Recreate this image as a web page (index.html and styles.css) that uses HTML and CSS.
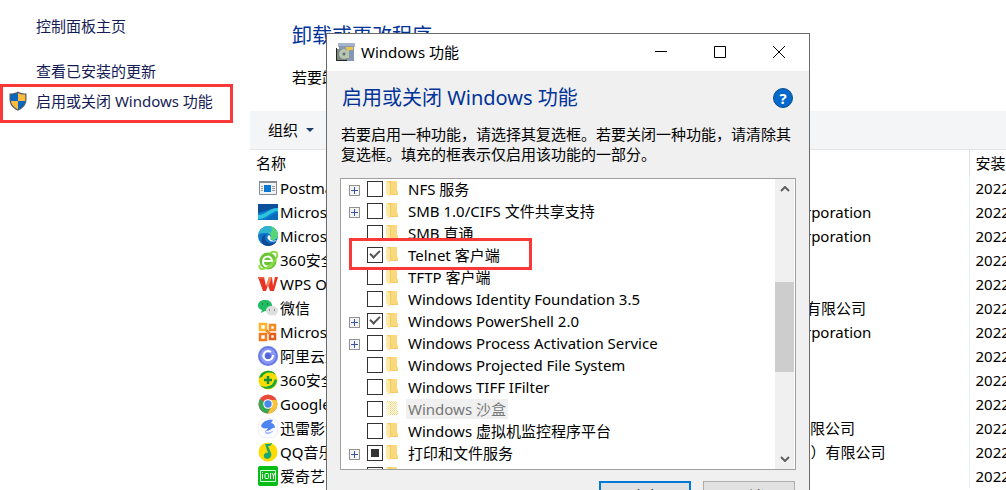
FILE: index.html
```html
<!DOCTYPE html>
<html lang="zh-CN">
<head>
    <meta charset="UTF-8">
    <meta name="viewport" content="width=device-width, initial-scale=1.0">
    <title>程序和功能</title>
    <link rel="stylesheet" href="styles.css">
</head>
<body>
    <!-- Shared icons -->
    <svg class="sprite" aria-hidden="true">
        <symbol id="folder" viewBox="0 0 12 16">
            <path d="M1 0h10v10h1v4H3z" fill="#f3ca63"/>
            <path d="M5 0h6v10h1v3H5z" fill="#f9d97c"/>
            <path d="M0 0l4 2v14l-3-2-1-3z" fill="#ffe9a6"/>
        </symbol>
    </svg>

    <div class="page">
        <nav class="sidebar">
            <a class="side-link" href="#">控制面板主页</a>
            <a class="side-link spaced" href="#">查看已安装的更新</a>
            <a class="side-link marked" href="#">
                <svg class="icon shield" viewBox="0 0 20 20">
                    <path d="M10 .5c2.500 1.500 5 2 8.500 2v6c0 5-3.500 9-8.500 11.300C5 17.500 1.500 13.500 1.500 8.500v-6c3.500 0 6-.5 8.500-2z" fill="#4d5b66"/>
                    <path d="M10 2v8H2.700V3.600C5.500 3.600 8 3 10 2z" fill="#0b66c3"/>
                    <path d="M10 2v8h7.300V3.600C14.500 3.600 12 3 10 2z" fill="#fdbc3a"/>
                    <path d="M10 10v8.400C6 16.500 3.300 13.500 2.800 10z" fill="#fdbc3a"/>
                    <path d="M10 10v8.400c4-1.900 6.700-4.900 7.200-8.400z" fill="#0b66c3"/>
                </svg>
                启用或关闭 Windows 功能
            </a>
        </nav>

        <main class="main">
            <h1>卸载或更改程序</h1>
            <p class="intro">若要卸载程序，请从列表中将其选中，然后单击“卸载”、“更改”或“修复”。</p>
            <div class="toolbar">
                <button type="button" class="organize">组织</button>
            </div>
            <table class="programs">
                <thead>
                    <tr><th class="col-name">名称</th><th class="col-publisher">发布者</th><th class="col-date">安装时间</th></tr>
                </thead>
                <tbody>
                    <tr>
                        <td><span class="program"><svg class="icon" viewBox="0 0 20 20"><path d="M1.500 3.500h17v13h-17z" fill="#f3f3f3" stroke="#858c92"/><path d="M1 3h18v2H1z" fill="#858c92"/><path d="M6 7h7v7H6z" fill="#0878d1"/><path d="M3 8.500h2M3 10.500h2M3 12.500h2M14 8.500h3M14 10.500h3M14 12.500h3" stroke="#999"/></svg>Postman</span></td>
                        <td>Postman</td><td>2022/3/15</td>
                    </tr>
                    <tr>
                        <td><span class="program"><svg class="icon" viewBox="0 0 20 20"><path d="M0 2h20v16H0z" fill="#087fd0"/><path d="M0 2h20v4C12 6 7 10 0 11z" fill="#0b4f9c"/><path d="M0 13C8 13 11 6 20 6v3C13 9 9 17 0 17z" fill="#2fc4dc"/><path d="M6 18c5-1 8-7 14-7v7z" fill="#096bb9"/></svg>Microsoft Azure</span></td>
                        <td>Microsoft Corporation</td><td>2022/3/15</td>
                    </tr>
                    <tr>
                        <td><span class="program"><svg class="icon" viewBox="0 0 20 20"><circle cx="10" cy="10" r="10" fill="#0b75c9"/><path d="M0 9C1 3 6 0 10 0c6 0 10 4 10 9 0 4-4 6-8 4 2-3 0-6-4-6-3 0-6 0-8 2z" fill="#2fb4d0"/><path d="M12 .3c5 1 8 5 8 9 0 4-5 6-8 4 2-2 1-5-1-6 3-1 4-4 1-7z" fill="#58d477"/><path d="M8 8c-3 4 0 10 6 9 2 0 4-1 5-2-3 5-9 6-13 4-4-3-3-9 2-11z" fill="#124b93"/><path d="M11 9c2 1 2 3 1 4 2 2 4 2 7 1-2 2-6 2-8 0-2-1-2-4 0-5z" fill="#fff"/></svg>Microsoft Edge</span></td>
                        <td>Microsoft Corporation</td><td>2022/3/15</td>
                    </tr>
                    <tr>
                        <td><span class="program"><svg class="icon" viewBox="0 0 20 20"><circle cx="10" cy="11" r="8.500" fill="#67c631"/><path d="M6 11h8c0-6-9-6-9 1 0 5 7 6 9 2" fill="none" stroke="#fff" stroke-width="2"/><path d="M2 15C-1 21 9 20 15 13 22 5 20-1 12 3" fill="none" stroke="#8bdc46" stroke-width="2"/></svg>360安全浏览器</span></td>
                        <td>360安全中心</td><td>2022/3/15</td>
                    </tr>
                    <tr>
                        <td><span class="program"><svg class="icon" viewBox="0 0 20 20"><path d="M0 3h6l2 9 3-9h3l1 9 2-9h3l-4 14h-4l-2-6-2 6H5z" fill="#e93324"/><path d="M8 12l3-9h3l-3 8z" fill="#f98a58"/><path d="M0 3h6v2H1z" fill="#f45438"/></svg>WPS Office</span></td>
                        <td>Kingsoft</td><td>2022/3/15</td>
                    </tr>
                    <tr>
                        <td><span class="program"><svg class="icon" viewBox="0 0 20 20"><path d="M7 2c4 0 7 2 7 5.500S11 13 7 13l-4 2 1-3C1 11 0 9.500 0 7.500 0 4 3 2 7 2z" fill="#20bd63"/><path d="M14 8c3 0 6 2 6 4.500 0 1.500-1 3-2 3.500v2l-2-1c-4 1-8-1-8-4.500C8 10 10 8 14 8z" fill="#dedede"/><path d="M4 6h1M9 6h1" stroke="#096f3c" stroke-width="1.500"/><path d="M11 12h1M16 12h1" stroke="#777" stroke-width="1.500"/></svg>微信</span></td>
                        <td>深圳腾讯科技有限公司</td><td>2022/3/15</td>
                    </tr>
                    <tr>
                        <td><span class="program"><svg class="icon" viewBox="0 0 20 20" fill="none" stroke-width="2.500"><path d="M2 2h6v6H2z" stroke="#fdb42b"/><path d="M12 3h5v5h-5z" stroke="#f58a25"/><path d="M2 12h6v6H2z" stroke="#f27a1d"/><path d="M12 12h5v5h-5z" stroke="#e45b1a"/><path d="M8 8l4 4" stroke="#f58a25"/></svg>Microsoft Office</span></td>
                        <td>Microsoft Corporation</td><td>2022/3/15</td>
                    </tr>
                    <tr>
                        <td><span class="program"><svg class="icon" viewBox="0 0 20 20"><circle cx="10" cy="10" r="10" fill="#6875e8"/><circle cx="10" cy="10" r="8" fill="#8998f2"/><path d="M13 6c-5-3-9 2-7 6 3 4 9 2 9-3" fill="none" stroke="#fff" stroke-width="2"/><circle cx="10" cy="10" r="3" fill="#5364db"/></svg>阿里云盘</span></td>
                        <td>Alibaba</td><td>2022/3/15</td>
                    </tr>
                    <tr>
                        <td><span class="program"><svg class="icon" viewBox="0 0 20 20"><circle cx="10" cy="10" r="9.500" fill="#f8dc00"/><path d="M1 8A9.500 9.500 0 0 1 18 5C12 0 6 3 4 7z" fill="#10a63d"/><path d="M2 15c5 4 12 1 15-6l2 1c-1 9-11 12-17 5z" fill="#14a840"/><circle cx="10" cy="10" r="6" fill="#f8dc00"/><path d="M10 6v8M6 10h8" stroke="#14913a" stroke-width="2.500"/></svg>360安全卫士</span></td>
                        <td>360安全中心</td><td>2022/3/15</td>
                    </tr>
                    <tr>
                        <td><span class="program"><svg class="icon" viewBox="0 0 20 20"><circle cx="10" cy="10" r="9.500" fill="#e84b3c"/><path d="M10 10L1.800 5.300A9.500 9.500 0 0 0 9.500 19.500L14 12z" fill="#35a853"/><path d="M10 10l4 2-4.500 7.500A9.500 9.500 0 0 0 18.500 6H10z" fill="#f8c43b"/><circle cx="10" cy="10" r="4.800" fill="#fff"/><circle cx="10" cy="10" r="3.700" fill="#4b88ec"/></svg>Google Chrome</span></td>
                        <td>Google LLC</td><td>2022/3/15</td>
                    </tr>
                    <tr>
                        <td><span class="program"><svg class="icon" viewBox="0 0 20 20"><rect x=".5" y=".5" width="19" height="19" rx="5" fill="#fcfcff" stroke="#f1f1f7"/><path d="M3 8C5 3 10 1 15 2l-2 3c2 0 4 2 4 5-3-1-4 3-9 3l2-3c-4 1-6 0-7-2z" fill="#4e83f3"/><path d="M7 12c2 4 6 2 9 0-3 5-10 6-9 0z" fill="#a5bdf8"/></svg>迅雷影音</span></td>
                        <td>深圳市迅雷 有限公司</td><td>2022/3/15</td>
                    </tr>
                    <tr>
                        <td><span class="program"><svg class="icon" viewBox="0 0 20 20"><circle cx="10" cy="10" r="9.500" fill="#fddc04"/><path d="M7 2c2 0 5 0 7-1-1 3-2 3-4 3l3 7c2 5-5 8-7 4-1-3 2-5 4-4z" fill="#18a873"/></svg>QQ音乐</span></td>
                        <td>腾讯科技(深圳）有限公司</td><td>2022/3/15</td>
                    </tr>
                    <tr>
                        <td><span class="program"><svg class="icon" viewBox="0 0 20 20"><rect width="20" height="20" rx="2" fill="#08bd16"/><path d="M2.500 4.500h15v11h-15z" fill="none" stroke="#d8ffe0"/><path d="M4.500 8v5M4.500 6v1M12.500 7v6M14 7l1.500 3L17 7M15.500 10v3" stroke="#fff" fill="none"/><rect x="7" y="7.500" width="3.500" height="5" rx="1" fill="none" stroke="#fff"/></svg>爱奇艺</span></td>
                        <td>爱奇艺</td><td>2022/3/15</td>
                    </tr>
                </tbody>
            </table>
        </main>
    </div>

    <section class="dialog" role="dialog" aria-labelledby="dialog-title">
        <header class="titlebar">
            <svg class="icon" viewBox="0 0 20 20">
                <path d="M2 1h17v4H2z" fill="#a6b3cb"/><path d="M3 4h15v15H3z" fill="#8a99ae"/>
                <path d="M10 5h7v11h-7z" fill="#e9c54a"/><path d="M13 8h4v10h-4z" fill="#8297bd"/>
                <path d="M0 7h11v12H0z" fill="#7d8a80"/><circle cx="8" cy="12" r="5" fill="#b8c4b4"/><circle cx="8" cy="12" r="1.500" fill="#637365"/>
                <path d="M.5 6v12.500H11" fill="none" stroke="#20262a"/>
            </svg>
            <span id="dialog-title" class="title">Windows 功能</span>
            <button type="button" class="window-button" aria-label="最小化"><svg viewBox="0 0 12 12"><path d="M0 5.500h12"/></svg></button>
            <button type="button" class="window-button" aria-label="最大化"><svg viewBox="0 0 12 12"><path d="M.5.5h11v11H.5z"/></svg></button>
            <button type="button" class="window-button" aria-label="关闭"><svg viewBox="0 0 12 12"><path d="M0 0l12 12M12 0L0 12"/></svg></button>
        </header>
        <div class="dialog-body">
            <div class="dialog-heading">
                <h2>启用或关闭 Windows 功能</h2>
                <button type="button" class="help" aria-label="帮助">?</button>
            </div>
            <p class="hint">若要启用一种功能，请选择其复选框。若要关闭一种功能，请清除其复选框。填充的框表示仅启用该功能的一部分。</p>
            <div class="feature-box">
                <ul class="features">
                    <li><button type="button" class="expand" aria-label="展开"></button><label><input type="checkbox"><svg class="folder"><use href="#folder"/></svg><span>NFS 服务</span></label></li>
                    <li><button type="button" class="expand" aria-label="展开"></button><label><input type="checkbox"><svg class="folder"><use href="#folder"/></svg><span>SMB 1.0/CIFS 文件共享支持</span></label></li>
                    <li><label><input type="checkbox"><svg class="folder"><use href="#folder"/></svg><span>SMB 直通</span></label></li>
                    <li class="marked"><label><input type="checkbox" checked><svg class="folder"><use href="#folder"/></svg><span>Telnet 客户端</span></label></li>
                    <li><label><input type="checkbox"><svg class="folder"><use href="#folder"/></svg><span>TFTP 客户端</span></label></li>
                    <li><label><input type="checkbox"><svg class="folder"><use href="#folder"/></svg><span>Windows Identity Foundation 3.5</span></label></li>
                    <li><button type="button" class="expand" aria-label="展开"></button><label><input type="checkbox" checked><svg class="folder"><use href="#folder"/></svg><span>Windows PowerShell 2.0</span></label></li>
                    <li><button type="button" class="expand" aria-label="展开"></button><label><input type="checkbox"><svg class="folder"><use href="#folder"/></svg><span>Windows Process Activation Service</span></label></li>
                    <li><label><input type="checkbox"><svg class="folder"><use href="#folder"/></svg><span>Windows Projected File System</span></label></li>
                    <li><label><input type="checkbox"><svg class="folder"><use href="#folder"/></svg><span>Windows TIFF IFilter</span></label></li>
                    <li class="unavailable"><label><input type="checkbox" disabled><svg class="folder"><use href="#folder"/></svg><span>Windows 沙盒</span></label></li>
                    <li><label><input type="checkbox"><svg class="folder"><use href="#folder"/></svg><span>Windows 虚拟机监控程序平台</span></label></li>
                    <li><button type="button" class="expand" aria-label="展开"></button><label><input type="checkbox" class="partial"><svg class="folder"><use href="#folder"/></svg><span>打印和文件服务</span></label></li>
                    <li><label><input type="checkbox"><svg class="folder"><use href="#folder"/></svg><span></span></label></li>
                </ul>
                <div class="scrollbar">
                    <svg viewBox="0 0 10 6"><path d="M1 5l4-4 4 4"/></svg>
                    <div class="track"><div class="thumb"></div></div>
                    <svg viewBox="0 0 10 6"><path d="M1 1l4 4 4-4"/></svg>
                </div>
            </div>
            <div class="actions">
                <button type="button" class="action primary">确定</button>
                <button type="button" class="action">取消</button>
            </div>
        </div>
    </section>
</body>
</html>
```

FILE: styles.css
```css
*,
*::before,
*::after {
    box-sizing: border-box;
}

body {
    margin: 0;
    height: 100vh;
    overflow: hidden;
    position: relative;
    background: #fff;
    color: #000;
    font-family: "Noto Sans", "Noto Sans CJK SC", sans-serif;
    font-size: 15px;
    line-height: 20px;
}

button {
    font: inherit;
    color: inherit;
    padding: 0;
    border: none;
    background: none;
}

h1, h2, p, ul {
    margin: 0;
    padding: 0;
}

h1, h2 {
    font-size: 20px;
    line-height: 30px;
    font-weight: normal;
    color: #003399;
}

.sprite {
    display: none;
}

.icon {
    width: 20px;
    height: 20px;
    flex: none;
}

.page {
    display: flex;
    height: 100%;
    overflow: hidden;
}

/* Left side links */
.sidebar {
    width: 250px;
    flex: none;
    padding-top: 11px;
}

.side-link {
    display: flex;
    align-items: center;
    gap: 8px;
    padding-left: 36px;
    line-height: 30px;
    color: #151c55;
    text-decoration: none;
}

.side-link.spaced {
    margin-top: 15px;
}

.side-link.marked {
    position: relative;
    padding-left: 8px;
}

/* Red frames */
.marked::after {
    content: "";
    position: absolute;
    border: 3px solid #fb3838;
    pointer-events: none;
}

.side-link.marked::after {
    left: 0;
    top: -2px;
    width: 233px;
    height: 39px;
}

/* Program list */
.main {
    flex: 1;
    min-width: 0;
    overflow: hidden;
    padding-top: 21px;
}

.main h1,
.intro {
    padding-left: 42px;
    white-space: nowrap;
}

.intro {
    margin: 16px 0 24px;
}

.toolbar {
    display: flex;
    height: 39px;
    padding-left: 18px;
    background: #f4f5f7;
    border-bottom: 1px solid #e3e5e7;
}

.organize {
    display: flex;
    align-items: center;
    gap: 8px;
}

.organize::after {
    content: "";
    border: 4px solid transparent;
    border-top-color: #1f3d68;
    border-bottom: none;
}

.programs {
    width: 100%;
    min-width: 840px;
    table-layout: fixed;
    border-collapse: collapse;
    white-space: nowrap;
}

.programs th,
.programs td {
    height: 24px;
    padding: 0 6px;
    text-align: left;
    font-weight: normal;
}

.programs th {
    height: 26px;
}

.programs .col-name {
    width: 460px;
}

.programs .col-publisher {
    width: 259px;
    border-right: 1px solid #e0e0e0;
}

.programs td:nth-child(2) {
    border-right: 1px solid #e8f1f8;
}

.programs td:first-child {
    padding-left: 8px;
}

.program {
    display: flex;
    align-items: center;
    gap: 2px;
}

/* Windows features dialog */
.dialog {
    position: absolute;
    left: 326px;
    top: 33px;
    width: 484px;
    background: #f0f0f0;
    border: 1px solid #6b6b6b;
}

.titlebar {
    display: flex;
    align-items: center;
    height: 37px;
    padding: 0 1px 2px 9px;
    background: #fff;
}

.title {
    flex: 1;
    padding-left: 5px;
}

.window-button {
    display: flex;
    justify-content: center;
    align-items: center;
    width: 59px;
    height: 34px;
}

.window-button svg {
    width: 12px;
    height: 12px;
    fill: none;
    stroke: #000;
}

.dialog-body {
    padding: 12px 13px;
}

.dialog-heading {
    display: flex;
    align-items: center;
    justify-content: space-between;
    padding: 0 3px 0 2px;
}

.help {
    width: 20px;
    height: 20px;
    border: 1px solid #0a4f93;
    border-radius: 50%;
    background: #0269cc;
    color: #fff;
    line-height: 18px;
    font-weight: bold;
}

.hint {
    margin: 11px 0 14px;
    padding-left: 1px;
}

.feature-box {
    display: flex;
    height: 292px;
    background: #fff;
    border: 1px solid #a0a0a0;
    overflow: hidden;
}

.features {
    flex: 1;
    list-style: none;
    margin-top: -1px;
}

.features li {
    display: flex;
    align-items: center;
    justify-content: flex-start;
    position: relative;
    height: 22px;
    padding-left: 26px;
}

.features li.marked::after {
    z-index: 1;
    left: 8px;
    top: -6px;
    width: 183px;
    height: 32px;
}

.features label {
    display: flex;
    align-items: center;
    white-space: nowrap;
}

.features span {
    padding: 0 2px;
    margin-left: 8px;
}

.features input {
    appearance: none;
    width: 16px;
    height: 16px;
    margin: 0 3px 0 0;
    border: 1px solid #333;
    background: #fff;
}

.features input:checked::before {
    content: "";
    display: block;
    width: 10px;
    height: 6px;
    margin: 2px;
    border-left: 2px solid #555;
    border-bottom: 2px solid #555;
    transform: rotate(-45deg);
}

.features input.partial::before {
    content: "";
    display: block;
    width: 8px;
    height: 8px;
    margin: 3px;
    background: #333;
}

.folder {
    width: 12px;
    height: 16px;
}

.expand {
    width: 11px;
    height: 11px;
    margin: 2px 7px 0 -18px;
    border: 1px solid #929292;
    background:
        linear-gradient(#3456a4, #3456a4) center / 7px 1px no-repeat,
        linear-gradient(#3456a4, #3456a4) center / 1px 7px no-repeat,
        #f3f3f3;
}

.unavailable span {
    background: #f0f0f0;
    color: #777;
}

.unavailable .folder {
    mask: repeating-conic-gradient(#000 0 25%, transparent 0 50%) 0 0 / 2px 2px;
}

.scrollbar {
    display: flex;
    flex-direction: column;
    align-items: center;
    width: 19px;
    margin-right: 1px;
    padding: 7px 0;
    background: #f0f0f0;
}

.scrollbar svg {
    width: 10px;
    height: 6px;
    fill: none;
    stroke: #606060;
    stroke-width: 2;
}

.track {
    flex: 1;
    width: 100%;
    padding-top: 90px;
}

.thumb {
    height: 90px;
    background: #cdcdcd;
}

.actions {
    display: flex;
    justify-content: flex-end;
    gap: 12px;
    margin-top: 11px;
    padding-right: 1px;
}

.action {
    width: 92px;
    height: 30px;
    border: 1px solid #adadad;
    background: #e1e1e1;
}

.action.primary {
    border: 2px solid #0078d7;
}
```
